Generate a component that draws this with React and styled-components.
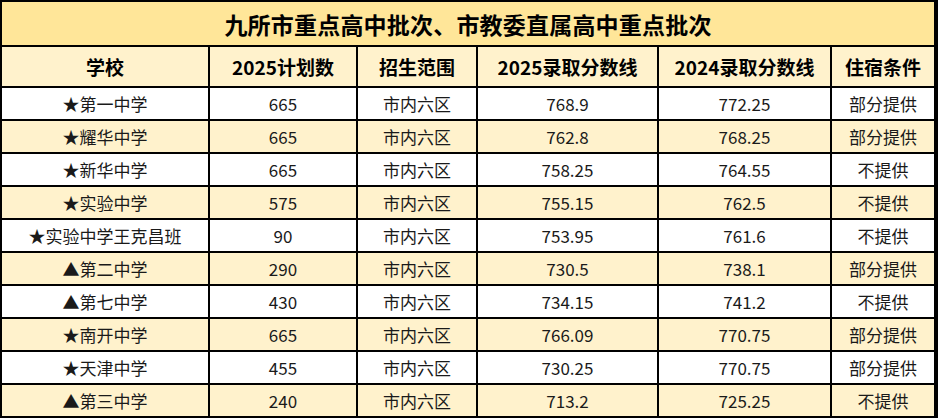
import React from 'react';
import styled, { createGlobalStyle } from 'styled-components';

const GlobalStyle = createGlobalStyle`
  html, body {
    margin: 0;
    padding: 0;
    background: #fff;
  }
  body {
    font-family: "Noto Sans CJK SC", "Noto Sans", sans-serif;
    color: #111;
  }
`;

const Sheet = styled.div`
  width: 936px;
  display: grid;
  grid-template-columns: 206px 146px 118px 179px 171px 102px;
  grid-template-rows: 43px 39px repeat(10, 31px);
  gap: 2px;
  padding: 2px;
  background: #000;
`;

const Title = styled.div`
  grid-column: 1 / -1;
  background: #ffe699;
  display: flex;
  align-items: center;
  justify-content: center;
  font-size: 23px;
  font-weight: 700;
  color: #000;
  letter-spacing: 0.2px;
`;

const HeadCell = styled.div`
  background: #fff2cc;
  display: flex;
  align-items: center;
  justify-content: center;
  font-size: 19px;
  font-weight: 700;
  color: #000;
`;

const Cell = styled.div`
  background: ${({ $shaded }) => ($shaded ? '#fff2cc' : '#ffffff')};
  display: flex;
  align-items: center;
  justify-content: center;
  font-size: 17px;
  color: #1a1a1a;
  white-space: nowrap;
`;

const headers = ['学校', '2025计划数', '招生范围', '2025录取分数线', '2024录取分数线', '住宿条件'];

const rows = [
  ['★第一中学', '665', '市内六区', '768.9', '772.25', '部分提供'],
  ['★耀华中学', '665', '市内六区', '762.8', '768.25', '部分提供'],
  ['★新华中学', '665', '市内六区', '758.25', '764.55', '不提供'],
  ['★实验中学', '575', '市内六区', '755.15', '762.5', '不提供'],
  ['★实验中学王克昌班', '90', '市内六区', '753.95', '761.6', '不提供'],
  ['▲第二中学', '290', '市内六区', '730.5', '738.1', '部分提供'],
  ['▲第七中学', '430', '市内六区', '734.15', '741.2', '不提供'],
  ['★南开中学', '665', '市内六区', '766.09', '770.75', '部分提供'],
  ['★天津中学', '455', '市内六区', '730.25', '770.75', '部分提供'],
  ['▲第三中学', '240', '市内六区', '713.2', '725.25', '不提供'],
];

const App = () => {
  return (
    <>
      <GlobalStyle />
      <Sheet>
        <Title>九所市重点高中批次、市教委直属高中重点批次</Title>
        {headers.map((h) => (
          <HeadCell key={h}>{h}</HeadCell>
        ))}
        {rows.map((row, i) =>
          row.map((value, j) => (
            <Cell key={`${i}-${j}`} $shaded={i % 2 === 1}>
              {value}
            </Cell>
          ))
        )}
      </Sheet>
    </>
  );
};

export default App;
